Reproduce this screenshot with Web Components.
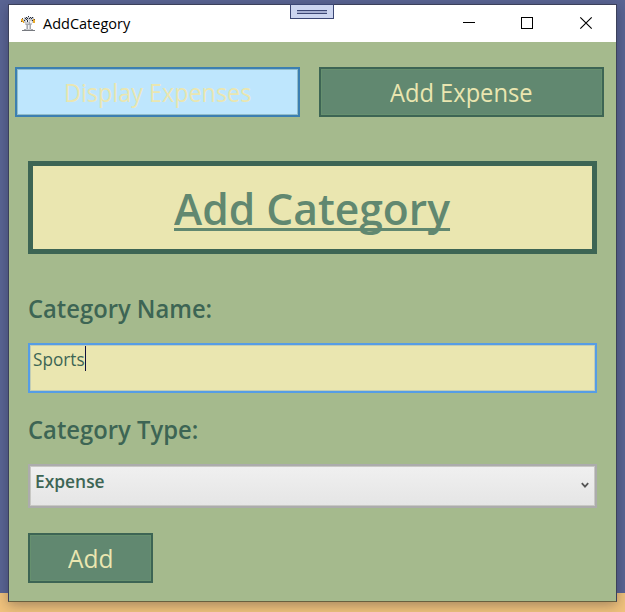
<!DOCTYPE html>
<html lang="en"><head><meta charset="utf-8"><title>AddCategory</title>
<style>
html,body{margin:0;height:100%;overflow:hidden}
body{font-family:"Open Sans","Noto Sans",sans-serif;background:linear-gradient(#5a6594 0 593px,#f0c27c 593px)}
</style></head><body>
<app-window caption="AddCategory">
 <nav-row>
  <flat-button hot><fit-text w="187" fs="25">Display Expenses</fit-text></flat-button>
  <flat-button><fit-text w="143" fs="25">Add Expense</fit-text></flat-button>
 </nav-row>
 <category-form></category-form>
</app-window>
<script>
function define(name, html, ready){
  customElements.define(name, class extends HTMLElement{
    constructor(){
      super();
      const t=document.createElement('template'); t.innerHTML=html;
      this.attachShadow({mode:'open'}).append(t.content.cloneNode(true));
    }
    connectedCallback(){ if(ready) ready(this,this.shadowRoot); }
  });
}

// Text scaled horizontally to a set width
define('fit-text',`<style>:host{display:block;white-space:nowrap}
span{display:inline-block;transform-origin:0 50%;line-height:inherit;vertical-align:top}
:host([underlined]) span{text-decoration:underline 3px;text-underline-offset:3px;text-decoration-skip-ink:none}
</style><span><slot></slot></span>`,(el,r)=>{
  const s=r.querySelector('span'), w=+el.getAttribute('w');
  el.style.width=w+'px'; el.style.fontSize=el.getAttribute('fs')+'px';
  s.style.transform='scaleX('+w/s.offsetWidth+')';
});

define('flat-button',`<style>:host{display:flex;box-sizing:border-box;height:50px;align-items:center;justify-content:center;
background:#618870;border:2px solid #3d6554;color:#eae6b0;line-height:46px;padding-right:1px;box-shadow:inset 0 0 0 1px #66906f}
:host([hot]){background:#bee6fd;border-color:#3c7fb1;box-shadow:inset 0 0 0 1px #92bdcb}
</style><slot></slot>`);

define('nav-row',`<style>:host{display:grid;grid-template-columns:285px 285px;gap:19px;padding:25px 0 0 6px}</style><slot></slot>`);

define('app-icon',`<style>:host{display:block;width:16px;height:16px}svg{display:block}</style>
<svg width="16" height="16" shape-rendering="crispEdges">
<path fill="#c9cbd0" d="M3 1h10v6h-2v2h-1v5h3v1H2v-1h3V9H4V7H2V3h1z"/>
<path fill="#f1f2f4" d="M5 4h3v2H5zM9 5h2v2H9zM7 9h1v4H7z"/>
<path fill="#e9ab2c" d="M0 3h2v3H0zM2 5h1v2H2zM12 3h2v4h-2z"/>
<path fill="#7c5521" d="M1 2h1v1H1zM0 5h1v1H0zM13 3h1v1h-1z"/>
<path fill="#252d3d" d="M5 1h1v1H5zM7 0h1v1H7zM9 1h1v1H9zM11 1h1v1h-1zM4 2h1v1H4zM6 2h1v1H6zM8 2h1v1H8zM10 2h1v1h-1zM3 4h1v1H3zM6 4h1v2H6zM5 3h1v1H5zM11 4h1v1h-1z"/>
<path fill="#a5a8ae" d="M8 6h1v2H8zM5 8h5v1H5zM9 9h1v4H9zM6 9h1v4H6zM3 13h2v1H3zM10 13h2v1h-2z"/>
<path fill="#777a80" d="M1 14h13v1H1z"/>
</svg>`);

define('title-bar',`<style>:host{display:flex;box-sizing:border-box;height:37px;background:#fff;color:#000;align-items:center;padding-left:12px;position:relative;line-height:36px}
fit-text{margin-left:6px}
.grip{position:absolute;left:281px;top:-1px}
.ctl{margin-left:auto;display:flex}
svg{display:block}</style>
<app-icon></app-icon><fit-text w="88.500" fs="14.5"><slot></slot></fit-text>
<svg class="grip" width="44" height="15" shape-rendering="crispEdges"><rect x=".5" y=".5" width="43" height="14" fill="#ccd5f0" stroke="#3b4674"/><path fill="#a6afd2" d="M7 7h30v2H7z"/><path fill="#3b4674" d="M7 6h30v1H7zM7 9h30v1H7z"/></svg>
<div class="ctl">
<svg width="58" height="37" shape-rendering="crispEdges"><path fill="#000" d="M12 17h12v1H12z"/></svg>
<svg width="58" height="37" shape-rendering="crispEdges"><path fill="none" stroke="#000" d="M12.500 12.500h11v11h-11z"/></svg>
<svg width="49" height="37"><path fill="none" stroke="#000" stroke-width="1.150" d="M13.300 12.300l11.400 11.400M24.700 12.300L13.300 23.700"/></svg>
</div>`);

define('app-window',`<style>:host{display:block;box-sizing:border-box;width:609px;height:598px;margin:4px 0 0 8px;border:1px solid #3b405a;border-bottom-color:#69603f;background:#a5ba8d;box-shadow:0 3px 12px rgba(20,20,40,.35)}</style>
<title-bar></title-bar><slot></slot>`,(el,r)=>{r.querySelector('title-bar').textContent=el.getAttribute('caption');});

define('page-heading',`<style>:host{display:flex;box-sizing:border-box;height:93px;justify-content:center;background:#eae6b0;border:5px solid #3d6554;color:#618870;font-weight:600;line-height:86px;padding-right:1px}</style><slot></slot>`);

define('text-field',`<style>:host{display:flex;box-sizing:border-box;height:50px;background:#eae6b0;border:2px solid #569de5;box-shadow:inset 0 0 0 1px #c2cdb5;padding:1px 0 0 3px;line-height:25px}
i{width:1px;height:25px;background:#10103c}</style><slot></slot><i></i>`);

define('select-field',`<style>:host{display:flex;box-sizing:border-box;height:44px;background:linear-gradient(#f0f0f0,#e5e5e5);border:2px solid #acacac;box-shadow:inset 0 0 0 1px #c8c8c4;padding:0 6px 0 5px;justify-content:space-between;line-height:31px;font-weight:600}
svg{margin-top:16px}</style><slot></slot><svg width="8" height="7"><path fill="none" stroke="#555" stroke-width="1.800" d="M.8 1.200L4 4.600 7.200 1.200"/></svg>`);

define('category-form',`<style>:host{display:flex;flex-direction:column;padding:44px 19px 0;color:#3d6554}
.lab{font-weight:600;line-height:36px;height:36px}
page-heading{margin-bottom:36px}
text-field{margin:17px 0 18px}
select-field{margin:17px 0 25px}
flat-button{width:125px}</style>
<page-heading><fit-text underlined w="276" fs="43.500">Add Category</fit-text></page-heading>
<fit-text class="lab" w="184.500" fs="25">Category Name:</fit-text>
<text-field><fit-text w="52" fs="18.500">Sports</fit-text></text-field>
<fit-text class="lab" w="170.500" fs="25">Category Type:</fit-text>
<select-field><fit-text w="69.500" fs="17.500">Expense</fit-text></select-field>
<flat-button><fit-text w="45" fs="25">Add</fit-text></flat-button>`);
</script>
</body></html>
